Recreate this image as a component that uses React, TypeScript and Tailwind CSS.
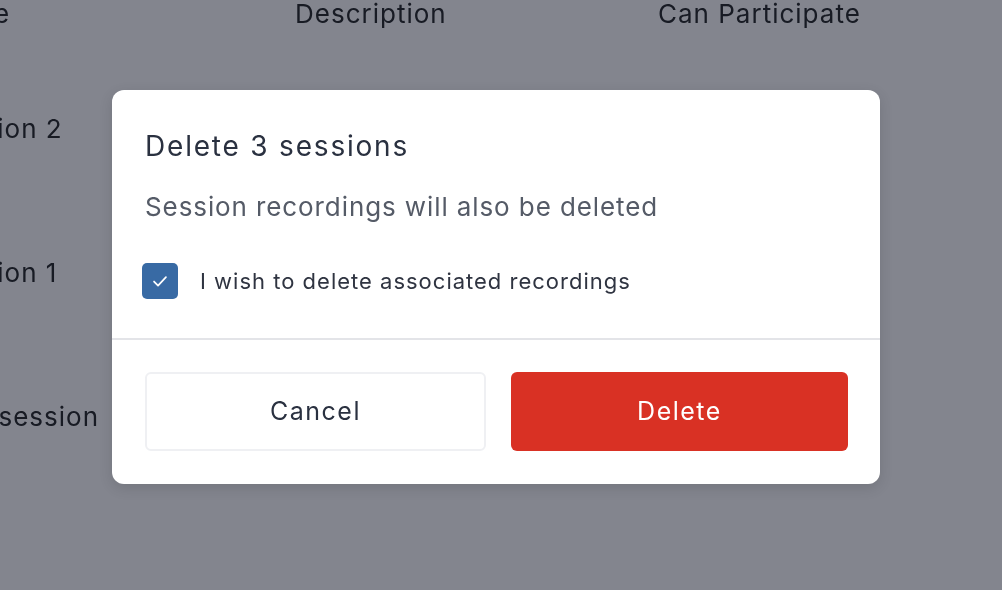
import { useState } from 'react';

const rows = ['Session 2', 'Session 1', 'Test session'];

function SessionsTable() {
  return (
    <div className="-ml-[66px] text-[26px] tracking-[1px] text-[#2d3340]">
      <div className="flex h-[27px] items-center">
        <div className="w-[361px]">Name</div>
        <div className="w-[363px]">Description</div>
        <div>Can Participate</div>
      </div>
      {rows.map((name) => (
        <div key={name} className="flex h-[144px] items-center pt-[58px]">
          <div className="w-[361px]">{name}</div>
          <div className="w-[363px]" />
          <div />
        </div>
      ))}
    </div>
  );
}

function CheckIcon() {
  return (
    <svg viewBox="0 0 24 24" className="h-[26px] w-[26px]" fill="none">
      <path
        d="M6.5 12.5l3.7 3.7L17.5 8.5"
        stroke="white"
        strokeWidth="1.6"
        strokeLinecap="round"
        strokeLinejoin="round"
      />
    </svg>
  );
}

export default function App() {
  const [checked, setChecked] = useState(true);

  return (
    <div
      className="relative h-[590px] w-[1002px] overflow-hidden bg-white"
      style={{ fontFamily: 'Inter, "Noto Sans", sans-serif' }}
    >
      <SessionsTable />

      <div className="absolute inset-0 bg-[#82848d] opacity-[0.99] mix-blend-multiply" />

      {/* Delete dialog */}
      <div className="absolute inset-0 flex items-start justify-center pr-[10px] pt-[90px]">
        <div className="w-[768px] rounded-[12px] bg-white shadow-[0_4px_14px_rgba(0,0,0,0.12)]">
          <div className="px-[33px] pt-[38px] pb-[39px]">
            <h2 className="text-[28px] leading-[36px] tracking-[1.8px] text-[#2a3140]">
              Delete 3 sessions
            </h2>
            <p className="mt-[27px] text-[26px] leading-[32px] tracking-[0.9px] text-[#555b67]">
              Session recordings will also be deleted
            </p>
            <label className="mt-[40px] -ml-[3px] flex items-center gap-[22px]">
              <button
                type="button"
                onClick={() => setChecked(!checked)}
                className="flex h-[36px] w-[36px] items-center justify-center rounded-[5px] bg-[#386aa4]"
              >
                {checked && <CheckIcon />}
              </button>
              <span className="text-[22px] tracking-[1px] text-[#2f3441]">
                I wish to delete associated recordings
              </span>
            </label>
          </div>
          <div className="flex gap-[25px] border-t-2 border-[#e3e4e8] pl-[33px] pr-[32px] pt-[32px] pb-[33px]">
            <button
              type="button"
              className="h-[79px] flex-1 rounded-[6px] border-2 border-[#eff0f3] bg-white text-[25px] tracking-[1.5px] text-[#2a3140]"
            >
              Cancel
            </button>
            <button
              type="button"
              className="h-[79px] flex-1 rounded-[6px] bg-[#d93124] text-[25px] tracking-[1.5px] text-white"
            >
              Delete
            </button>
          </div>
        </div>
      </div>
    </div>
  );
}
